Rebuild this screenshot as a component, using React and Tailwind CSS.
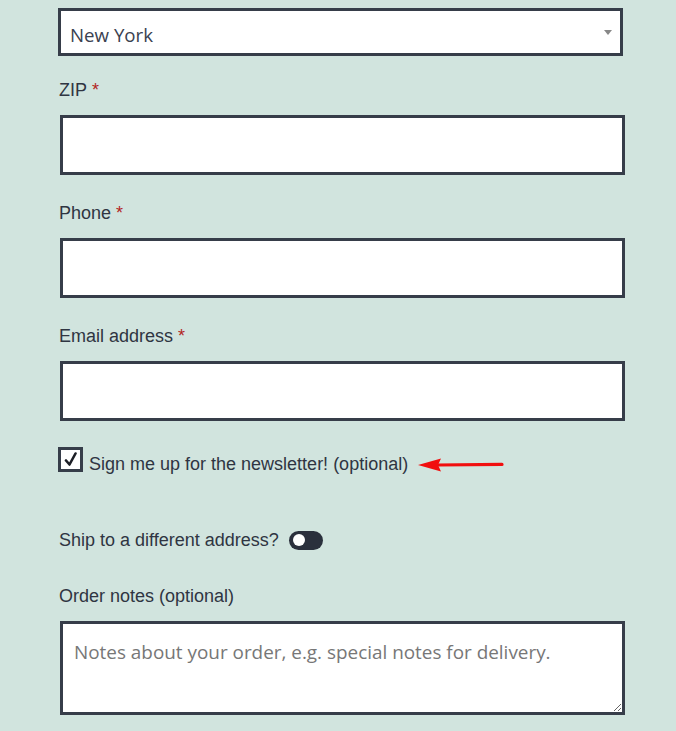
import React from "react";

function Label({ children, required }) {
  return (
    <div className="h-[24px] leading-[24px] text-[18px] text-[#2f3542] font-['Liberation_Sans',Arial,sans-serif]">
      {children}
      {required && <span className="text-[#b3261e] ml-[5px]">*</span>}
    </div>
  );
}

function Input() {
  return (
    <input
      type="text"
      className="block w-[565px] h-[60px] border-[3px] border-[#363d49] bg-white ml-[2px] outline-none"
    />
  );
}

export default function App() {
  return (
    <div className="min-h-[731px] w-[676px] bg-[#d1e4de] overflow-hidden font-['Liberation_Sans',Arial,sans-serif]">
      <div className="pl-[58px] pt-[8px] flex flex-col">
        {/* Select */}
        <div className="relative w-[565px] h-[48px] border-[3px] border-[#363d49] bg-white flex items-center">
          <span className="pl-[9px] pt-[7px] text-[18.7px] text-[#3a4150] font-['Open_Sans',sans-serif]">
            New York
          </span>
          <span className="absolute right-[8px] top-[19px] w-0 h-0 border-l-[4px] border-r-[4px] border-t-[5px] border-l-transparent border-r-transparent border-t-[#888888]" />
        </div>

        <div className="mt-[22px] ml-[1px]">
          <Label required>ZIP</Label>
        </div>
        <div className="mt-[13px]">
          <Input />
        </div>

        <div className="mt-[26px] ml-[1px]">
          <Label required>Phone</Label>
        </div>
        <div className="mt-[13px]">
          <Input />
        </div>

        <div className="mt-[26px] ml-[1px]">
          <Label required>Email address</Label>
        </div>
        <div className="mt-[13px]">
          <Input />
        </div>

        {/* Newsletter checkbox */}
        <div className="mt-[23px] flex items-end h-[28px]">
          <div className="w-[25px] h-[25px] border-[3px] border-[#363d49] bg-white flex items-center justify-center shrink-0">
            <svg width="14" height="15" viewBox="0 0 14 15">
              <path d="M2 8.5 L5.5 12.5 L11.5 1.5" fill="none" stroke="#1c1f26" strokeWidth="2.6" strokeLinecap="round" strokeLinejoin="round" />
            </svg>
          </div>
          <span className="ml-[6px] text-[18px] leading-[22px] text-[#2f3542] translate-y-[3px]">
            Sign me up for the newsletter! (optional)
          </span>
          <svg className="ml-[10px] mb-[-1px]" width="86" height="16" viewBox="0 0 86 16">
            <path d="M20 6.5 L84 5.8 a1.6 1.6 0 0 1 0 3.2 L20 9.5 Z" fill="#f10f0f" />
            <path d="M0 8 L23 1.5 L20 8 L23 14.5 Z" fill="#f10f0f" />
          </svg>
        </div>

        {/* Ship toggle */}
        <div className="mt-[56px] ml-[1px] flex items-center h-[24px]">
          <span className="text-[18px] leading-[24px] text-[#2f3542]">Ship to a different address?</span>
          <div className="ml-[10px] w-[34px] h-[19px] rounded-full bg-[#2a303c] flex items-center pl-[4px]">
            <div className="w-[12px] h-[12px] rounded-full bg-white" />
          </div>
        </div>

        <div className="mt-[32px] ml-[1px]">
          <div className="h-[24px] leading-[24px] text-[18px] text-[#2f3542]">Order notes (optional)</div>
        </div>

        <div className="mt-[13px] ml-[2px]">
          <textarea
            placeholder="Notes about your order, e.g. special notes for delivery."
            className="block w-[565px] h-[94px] border-[3px] border-[#363d49] bg-white px-[11px] pt-[16px] text-[18.9px] leading-[24px] font-['Open_Sans',sans-serif] placeholder:text-[#777777] outline-none resize"
          />
        </div>
      </div>
    </div>
  );
}
